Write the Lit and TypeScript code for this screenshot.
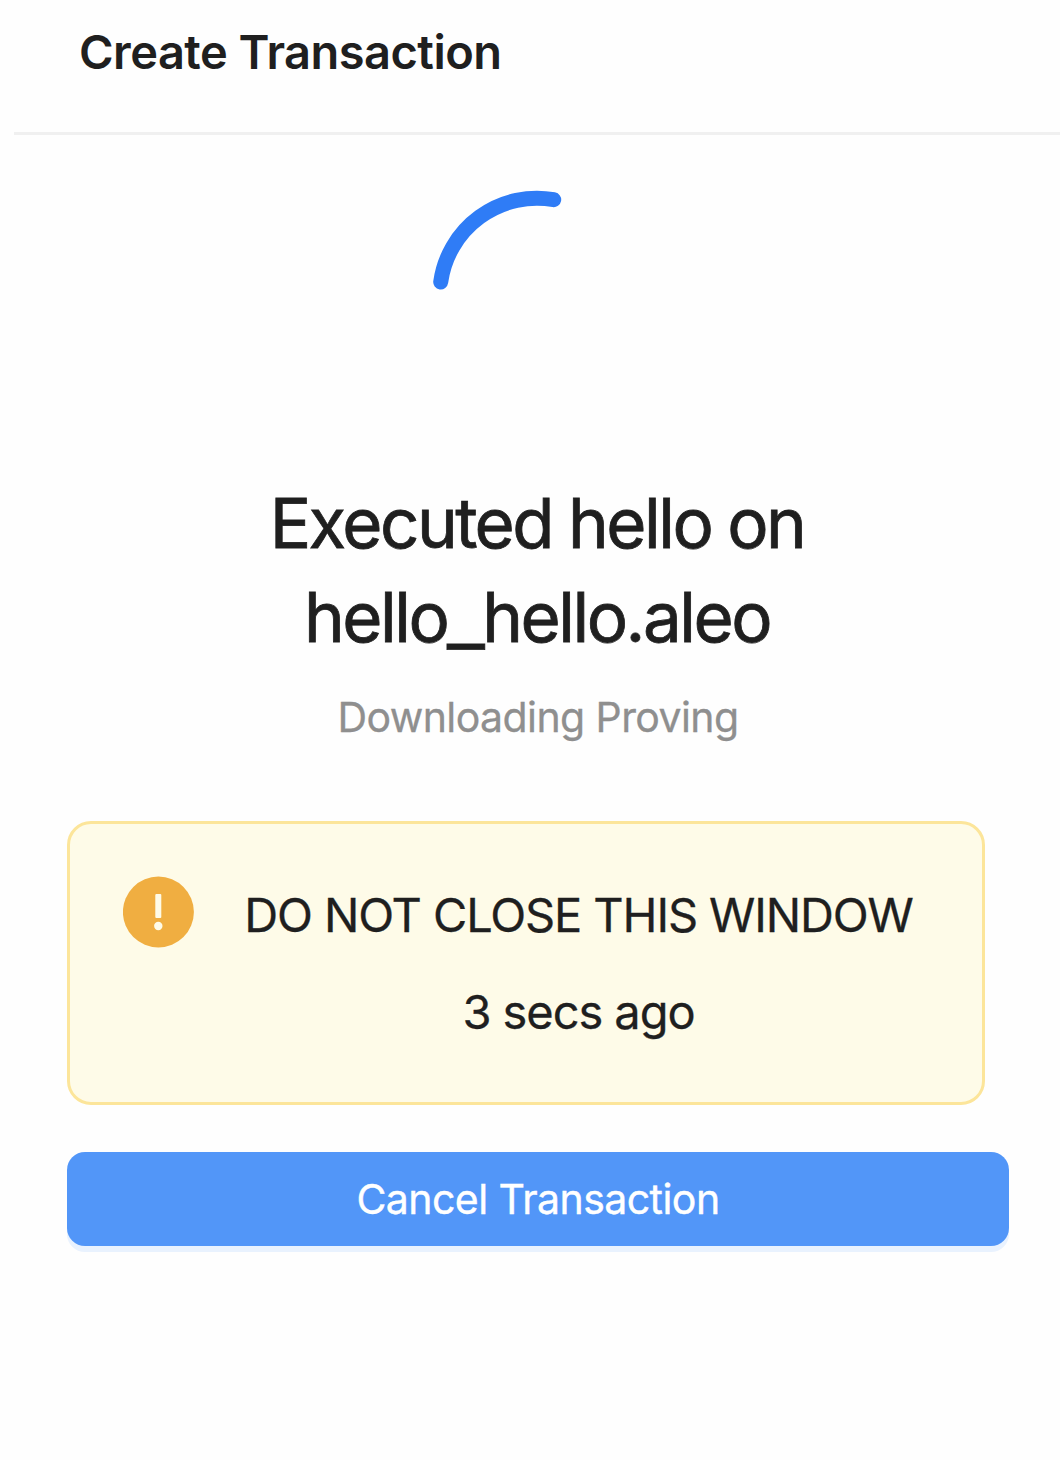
import { LitElement, html, css } from "lit";
import { customElement, property } from "lit/decorators.js";

@customElement("alert-box")
class AlertBox extends LitElement {
  @property() message = "";
  @property() elapsed = "";

  static styles = css`
    :host {
      display: flex;
      box-sizing: border-box;
      width: 918px;
      height: 284px;
      margin-top: 72px;
      padding: 52px 0 0 53px;
      border: 3px solid #fce59a;
      border-radius: 24px;
      background: #fefbe8;
    }
    .icon { width: 71px; height: 72px; flex: none; }
    .texts {
      display: flex;
      flex-direction: column;
      align-items: center;
      width: 669px;
      margin-left: 50px;
      padding-top: 3px;
      gap: 25px;
      font-size: 47px;
      line-height: 72px;
      white-space: nowrap;
      -webkit-text-stroke: 0.3px currentColor;
    }
    .message { letter-spacing: -1.12px; }
    .elapsed { letter-spacing: -1.05px; }
  `;

  render() {
    return html`
      <svg class="icon" viewBox="0 0 71 72" aria-hidden="true">
        <circle cx="35.4" cy="36" r="35.5" fill="#f0ae41" />
        <rect x="32.3" y="18" width="6" height="24" rx="1" fill="#fefbe8" />
        <circle cx="35.3" cy="50" r="4.2" fill="#fefbe8" />
      </svg>
      <div class="texts">
        <span class="message">${this.message}</span>
        <span class="elapsed">${this.elapsed}</span>
      </div>
    `;
  }
}

@customElement("app-root")
class AppRoot extends LitElement {
  static styles = css`
    :host {
      display: block;
      height: 1460px;
      overflow: hidden;
      background: #fefefe;
      color: #1f1f1f;
      font-family: Inter, "Liberation Sans", sans-serif;
    }
    .header {
      box-sizing: border-box;
      height: 135px;
      margin-left: 14px;
      padding: 16px 0 0 65px;
      border-bottom: 3px solid #f0f0f0;
    }
    .title {
      margin: 0;
      font-size: 47px;
      line-height: 72px;
      font-weight: 600;
      letter-spacing: -0.53px;
    }
    .content {
      display: flex;
      flex-direction: column;
      padding: 55px 51px 0 67px;
    }
    .spinner { width: 210px; height: 210px; align-self: center; }
    .heading {
      margin: 76px 0 0;
      padding-right: 2px;
      font-size: 69px;
      line-height: 94px;
      font-weight: 400;
      text-align: center;
      letter-spacing: -2.5px;
      word-spacing: -1px;
      -webkit-text-stroke: 0.8px currentColor;
    }
    .underscore {
      display: inline-block;
      margin-right: 6px;
      transform: translateY(2px) scaleX(1.2);
      transform-origin: left;
    }
    .status {
      margin: 21px 0 0;
      font-size: 41px;
      line-height: 64px;
      text-align: center;
      letter-spacing: -0.58px;
      color: #8f8f8f;
      -webkit-text-stroke: 0.3px currentColor;
    }
    .cancel {
      height: 94px;
      margin: 47px 0 0;
      padding: 0;
      border: 0;
      border-radius: 18px;
      background: #5296f8;
      box-shadow: 0 6px 0 #e9f2fe;
      color: #fff;
      font: 400 41px/64px Inter, "Liberation Sans", sans-serif;
      letter-spacing: -0.55px;
      -webkit-text-stroke: 0.4px currentColor;
    }
  `;

  render() {
    return html`
      <header class="header"><h1 class="title">Create Transaction</h1></header>
      <main class="content">
        <svg class="spinner" viewBox="0 0 210 210" aria-label="Loading">
          <path d="M120.7 9.7A97.2 97.2 0 0 0 7.7 92" fill="none"
            stroke="#2f7cf6" stroke-width="15" stroke-linecap="round" />
        </svg>
        <h2 class="heading">Executed hello on<br />hello<span class="underscore">_</span>hello.aleo</h2>
        <p class="status">Downloading Proving</p>
        <alert-box message="DO NOT CLOSE THIS WINDOW" elapsed="3 secs ago"></alert-box>
        <button class="cancel">Cancel Transaction</button>
      </main>
    `;
  }
}
